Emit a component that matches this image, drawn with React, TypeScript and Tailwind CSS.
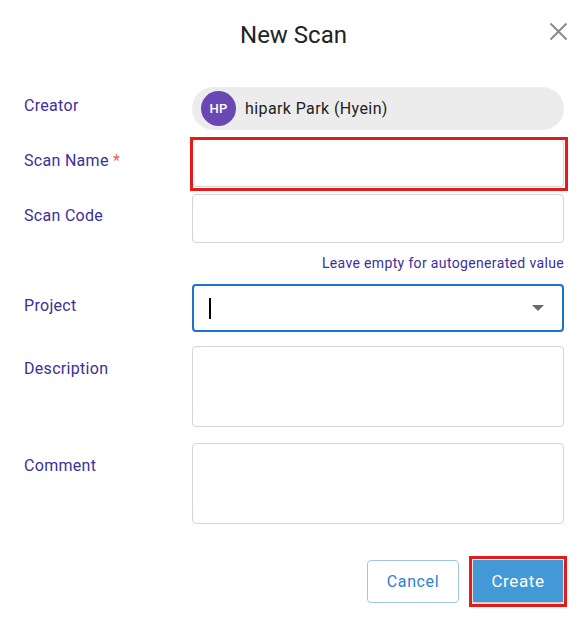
import React from "react";

const labelCls = "w-[192px] shrink-0 pl-[24px] pt-[10px] text-[16px] leading-[24px] tracking-[0.3px] text-[#3b2f9a]";
const inputCls = "w-[372px] rounded-[4px] border border-[#d4d4dc] bg-white";

export default function App() {
  return (
    <div className="relative h-[638px] w-[587px] bg-white font-['Roboto',sans-serif] text-[#222]">
      {/* Header */}
      <div className="relative flex h-[70px] items-center justify-center">
        <h1 className="text-[24px] leading-[30px] text-[#222]">New Scan</h1>
        <button className="absolute right-[19px] top-[22px] h-[19px] w-[19px]" aria-label="close">
          <svg viewBox="0 0 19 19" width="19" height="19">
            <path d="M1.5 1.5 L17.5 17.5 M17.5 1.5 L1.5 17.5" stroke="#8a8a8a" strokeWidth="2" fill="none" />
          </svg>
        </button>
      </div>

      {/* Creator */}
      <div className="mt-[17px] flex">
        <div className={labelCls + " !pt-[7px]"}>Creator</div>
        <div className="flex h-[43px] w-[372px] items-center gap-[9px] rounded-full bg-[#ececec] pl-[9px]">
          <div className="flex h-[35px] w-[35px] items-center justify-center rounded-full bg-[#6a48b3] text-[13px] font-medium tracking-[0.3px] text-white">
            HP
          </div>
          <span className="text-[16px] tracking-[0.4px] text-[#222]">hipark Park (Hyein)</span>
        </div>
      </div>

      {/* Scan Name */}
      <div className="mt-[9px] flex">
        <div className={labelCls}>
          Scan Name <span className="text-[#e0675f]">*</span>
        </div>
        <div className="relative">
          <div className={inputCls + " h-[48px]"} />
          <div className="pointer-events-none absolute -left-[2px] -right-[4px] -top-[2px] -bottom-[4px] border-[3px] border-[#e31b1b]" />
        </div>
      </div>

      {/* Scan Code */}
      <div className="mt-[7px] flex">
        <div className={labelCls}>Scan Code</div>
        <div className={inputCls + " h-[49px]"} />
      </div>
      <div className="mt-[10px] flex w-[564px] justify-end">
        <span className="text-[14px] leading-[20px] tracking-[0.35px] text-[#3b2f9a]">Leave empty for autogenerated value</span>
      </div>

      {/* Project */}
      <div className="mt-[11px] flex">
        <div className={labelCls}>Project</div>
        <div className="flex h-[48px] w-[372px] items-center justify-between rounded-[4px] border-2 border-[#1a73d1] pl-[15px] pr-[18px]">
          <div className="h-[21px] w-[2px] bg-black" />
          <svg width="12" height="6" viewBox="0 0 12 6">
            <path d="M0 0 L12 0 L6 6 Z" fill="#6b6b6b" />
          </svg>
        </div>
      </div>

      {/* Description */}
      <div className="mt-[14px] flex">
        <div className={labelCls + " !pt-[11px]"}>Description</div>
        <div className={inputCls + " h-[81px]"} />
      </div>

      {/* Comment */}
      <div className="mt-[16px] flex">
        <div className={labelCls + " !pt-[11px]"}>Comment</div>
        <div className={inputCls + " h-[81px]"} />
      </div>

      {/* Buttons */}
      <div className="mt-[36px] flex w-[563px] justify-end gap-[14px]">
        <button className="h-[43px] w-[92px] rounded-[4px] border border-[#9cc6ee] bg-white text-[16px] tracking-[0.6px] text-[#2f7fd6]">
          Cancel
        </button>
        <div className="relative">
          <button className="h-[42px] w-[90px] bg-[#4398d6] pt-[2px] text-[17px] tracking-[0.6px] text-white shadow-[0_2px_4px_rgba(0,0,0,0.25)]">
            Create
          </button>
          <div className="pointer-events-none absolute -left-[4px] -right-[4px] -top-[4px] -bottom-[4px] border-[3px] border-[#e31b1b]" />
        </div>
      </div>
    </div>
  );
}
